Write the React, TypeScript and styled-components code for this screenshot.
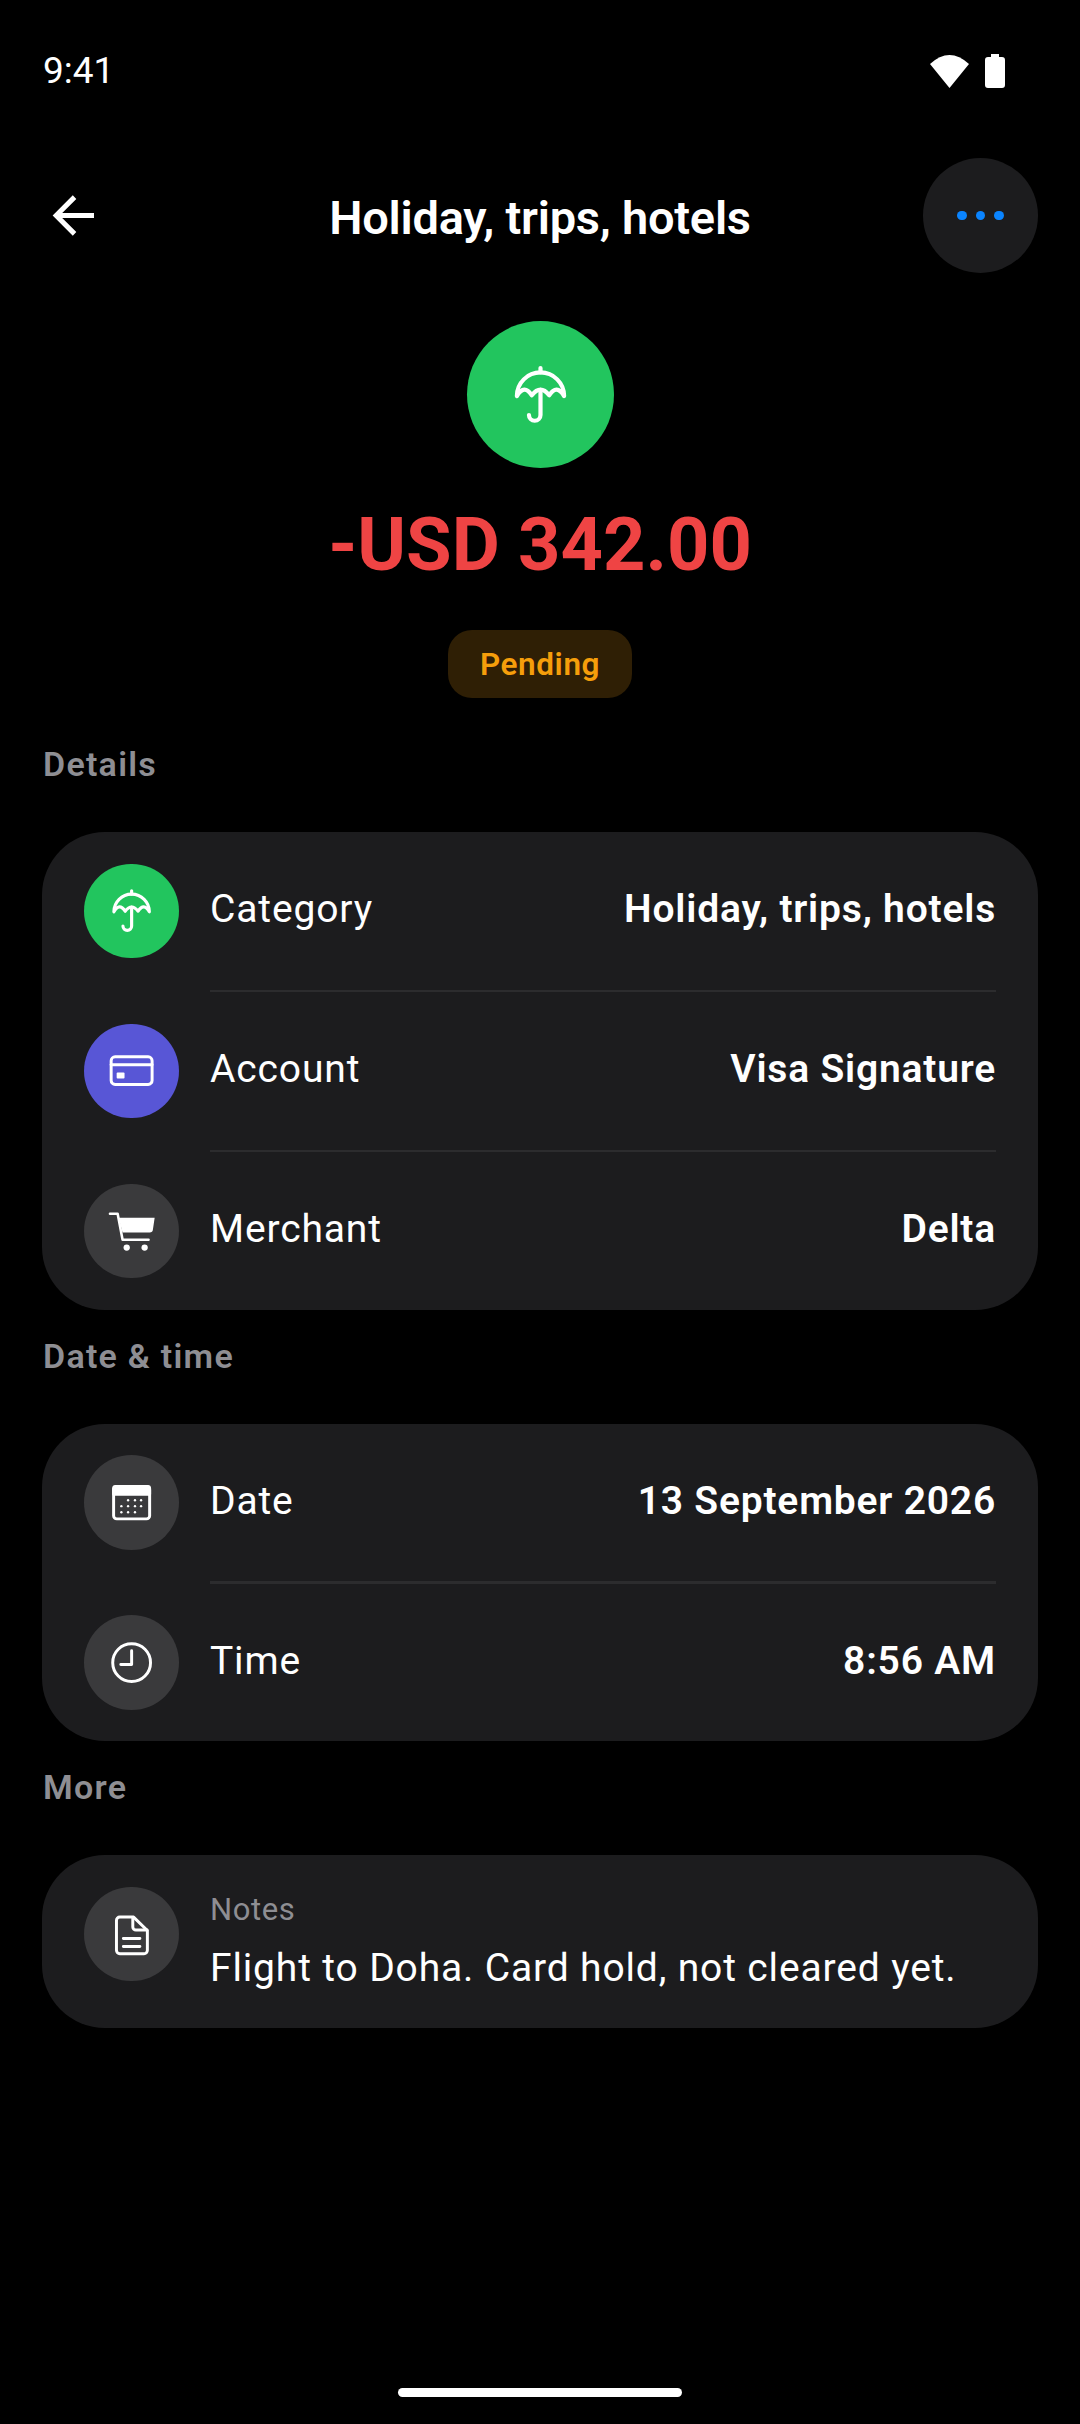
import React from 'react';
import styled, { createGlobalStyle } from 'styled-components';

const GlobalStyle = createGlobalStyle`
  * {
    box-sizing: border-box;
  }

  html,
  body {
    margin: 0;
    background: #000;
  }

  body {
    font-family: Roboto, 'Liberation Sans', sans-serif;
    color: #fff;
  }
`;

const Screen = styled.div`
  width: 1080px;
  height: 2424px;
  background: #000;
  display: flex;
  flex-direction: column;
  overflow: hidden;
`;

const StatusBar = styled.div`
  height: 140px;
  padding: 2px 75px 0 43px;
  display: flex;
  align-items: center;
  justify-content: space-between;
`;

const Clock = styled.span`
  font-size: 37px;
  line-height: 42px;
`;

const StatusIcons = styled.div`
  display: flex;
  align-items: center;
  gap: 16px;
`;

const Header = styled.header`
  margin-top: 18px;
  padding: 0 42px;
  display: grid;
  grid-template-columns: 115px 1fr 115px;
  align-items: center;
`;

const Title = styled.h1`
  margin: 5px 0 0;
  text-align: center;
  font-size: 47px;
  line-height: 54px;
  font-weight: 600;
  letter-spacing: -0.25px;
`;

const MoreButton = styled.button`
  width: 115px;
  height: 115px;
  padding: 0;
  border: 0;
  border-radius: 50%;
  background: #1c1c1e;
  display: flex;
  align-items: center;
  justify-content: center;
  gap: 9px;
`;

const Dot = styled.span`
  width: 9.5px;
  height: 9.5px;
  border-radius: 50%;
  background: #0a84ff;
`;

const Hero = styled.section`
  margin-top: 48px;
  display: flex;
  flex-direction: column;
  align-items: center;
`;

const Amount = styled.div`
  margin-top: 33px;
  font-size: 74px;
  line-height: 88px;
  font-weight: 700;
  color: #ef4444;
`;

const Badge = styled.div`
  margin-top: 41px;
  height: 68px;
  padding: 0 32px;
  border-radius: 24px;
  background: #2f1f05;
  color: #f59e0b;
  font-size: 31.5px;
  font-weight: 600;
  letter-spacing: 0.6px;
  display: flex;
  align-items: center;
`;

const SectionLabel = styled.h2<{ $first?: boolean }>`
  margin: ${({ $first }) => ($first ? '46px' : '26px')} 42px 48px 43px;
  font-size: 34px;
  line-height: 40px;
  font-weight: 600;
  letter-spacing: 1.25px;
  color: #8e8e93;
`;

const Card = styled.section`
  margin: 0 42px;
  border-radius: 63px;
  background: #1c1c1e;
`;

const Row = styled.div<{ $top?: boolean }>`
  padding: 31.5px 42px;
  display: flex;
  align-items: ${({ $top }) => ($top ? 'flex-start' : 'center')};
  gap: 31.5px;
`;

const Divider = styled.div`
  height: 2.6px;
  margin: 0 42px 0 168px;
  background: #2c2c2e;
`;

const IconCircle = styled.div<{ $color?: string; $size?: number }>`
  width: ${({ $size }) => $size ?? 94.5}px;
  height: ${({ $size }) => $size ?? 94.5}px;
  flex: none;
  border-radius: 50%;
  background: ${({ $color }) => $color ?? '#3a3a3c'};
  display: flex;
  align-items: center;
  justify-content: center;
`;

const RowLabel = styled.span`
  flex: 1;
  padding-bottom: 3px;
  font-size: 39px;
  letter-spacing: 0.85px;
  color: #fff;
`;

const RowValue = styled.span`
  padding-bottom: 3px;
  font-size: 39px;
  font-weight: 600;
  letter-spacing: 0.8px;
  color: #fff;
`;

const NoteText = styled.div`
  flex: 1;
  padding-bottom: 5px;
  display: flex;
  flex-direction: column;
`;

const NoteLabel = styled.span`
  font-size: 31px;
  line-height: 45px;
  letter-spacing: 0.6px;
  color: #8e8e93;
`;

const NoteBody = styled.span`
  margin-top: 13px;
  font-size: 39px;
  line-height: 47px;
  letter-spacing: 0.85px;
  color: #fff;
`;

const HomeBar = styled.div`
  width: 284px;
  height: 9px;
  margin: auto auto 27px;
  border-radius: 5px;
  background: #fff;
`;

const Glyph = styled.svg.attrs({ viewBox: '0 0 24 24', fill: 'none' })<{ $size?: number }>`
  width: ${({ $size }) => $size ?? 47.25}px;
  height: ${({ $size }) => $size ?? 47.25}px;
  display: block;
  stroke: #fff;
  stroke-width: 1.5;
  stroke-linecap: round;
  stroke-linejoin: round;
`;

const WifiIcon = () => (
  <svg width="39" height="33" viewBox="0 0 39 33" aria-hidden="true">
    <path d="M0 9Q19.5-9 39 9L19.5 33Z" fill="#fff" />
  </svg>
);

const BatteryIcon = () => (
  <svg width="20" height="34" viewBox="0 0 20 34" aria-hidden="true">
    <path d="M6 0H14V3H17A3 3 0 0 1 20 6V31A3 3 0 0 1 17 34H3A3 3 0 0 1 0 31V6A3 3 0 0 1 3 3H6Z" fill="#fff" />
  </svg>
);

const BackIcon = () => (
  <Glyph $size={63} style={{ strokeWidth: 1.9, strokeLinecap: 'butt', strokeLinejoin: 'miter' }}>
    <path d="M19.8 12H5.2M12.4 5l-7 7 7 7" />
  </Glyph>
);

const UmbrellaIcon = ({ size }: { size?: number }) => (
  <Glyph $size={size} style={{ strokeWidth: 1.6 }}>
    <path d="M12 1.9V3.6" />
    <path d="M3 12.6A9 9 0 0 1 21 12.6Q18.2 7.8 15.3 12.3Q12 8 8.7 12.3Q5.8 7.8 3 12.6Z" />
    <path d="M12 10.2V19.8a2.2 2.2 0 0 1-4.4 0" />
  </Glyph>
);

const CardIcon = () => (
  <Glyph>
    <rect x="1.6" y="5" width="20.8" height="14" rx="2" />
    <path d="M1.6 9H22.4" />
    <rect x="4.4" y="13" width="4" height="3" rx="0.5" fill="#fff" stroke="none" />
  </Glyph>
);

const CartIcon = () => (
  <Glyph style={{ strokeWidth: 1.3 }}>
    <path d="M1 3.4H4.9L7.4 16.6H20.6" />
    <path d="M5.4 5.4H23.7L22.8 11.6A1.6 1.6 0 0 1 21.2 13H7.4Z" fill="#fff" stroke="none" />
    <circle cx="9.5" cy="20.6" r="1.6" fill="#fff" stroke="none" />
    <circle cx="18.6" cy="20.6" r="1.6" fill="#fff" stroke="none" />
  </Glyph>
);

const calendarDots = [
  [10.2, 10.8], [13.7, 10.8], [16.8, 10.8],
  [6.8, 13.8], [10.2, 13.8], [13.7, 13.8], [16.8, 13.8],
  [6.8, 16.9], [10.2, 16.9], [13.7, 16.9],
];

const CalendarIcon = () => (
  <Glyph>
    <rect x="2.85" y="3.85" width="18.3" height="16.4" rx="1.6" />
    <path d="M2.85 4.85A1 1 0 0 1 3.85 3.85H20.15A1 1 0 0 1 21.15 4.85V7.7H2.85Z" fill="#fff" />
    {calendarDots.map(([cx, cy]) => (
      <circle key={`${cx}-${cy}`} cx={cx} cy={cy} r="0.6" fill="#fff" stroke="none" />
    ))}
  </Glyph>
);

const ClockIcon = () => (
  <Glyph>
    <circle cx="12" cy="12" r="9.6" />
    <path d="M12 6V13H6.5" />
  </Glyph>
);

const NoteIcon = () => (
  <Glyph>
    <path d="M6 3.6H13L20 10.4V20.5a1.7 1.7 0 0 1-1.7 1.7H6a1.7 1.7 0 0 1-1.7-1.7V5.3A1.7 1.7 0 0 1 6 3.6Z" />
    <path d="M12.6 3.8V8.6a1.6 1.6 0 0 0 1.6 1.6H19.8" />
    <path d="M7.8 14.5H16.2M7.8 18.5H16.2" />
  </Glyph>
);

const App = () => (
  <Screen>
    <GlobalStyle />
    <StatusBar>
      <Clock>9:41</Clock>
      <StatusIcons>
        <WifiIcon />
        <BatteryIcon />
      </StatusIcons>
    </StatusBar>

    <Header>
      <BackIcon />
      <Title>Holiday, trips, hotels</Title>
      <MoreButton type="button" aria-label="More">
        <Dot />
        <Dot />
        <Dot />
      </MoreButton>
    </Header>

    <Hero>
      <IconCircle $color="#22c55e" $size={147}>
        <UmbrellaIcon size={63} />
      </IconCircle>
      <Amount>-USD 342.00</Amount>
      <Badge>Pending</Badge>
    </Hero>

    <SectionLabel $first>Details</SectionLabel>
    <Card>
      <Row>
        <IconCircle $color="#22c55e"><UmbrellaIcon /></IconCircle>
        <RowLabel>Category</RowLabel>
        <RowValue>Holiday, trips, hotels</RowValue>
      </Row>
      <Divider />
      <Row>
        <IconCircle $color="#5856d6"><CardIcon /></IconCircle>
        <RowLabel>Account</RowLabel>
        <RowValue>Visa Signature</RowValue>
      </Row>
      <Divider />
      <Row>
        <IconCircle><CartIcon /></IconCircle>
        <RowLabel>Merchant</RowLabel>
        <RowValue>Delta</RowValue>
      </Row>
    </Card>

    <SectionLabel>Date &amp; time</SectionLabel>
    <Card>
      <Row>
        <IconCircle><CalendarIcon /></IconCircle>
        <RowLabel>Date</RowLabel>
        <RowValue>13 September 2026</RowValue>
      </Row>
      <Divider />
      <Row>
        <IconCircle><ClockIcon /></IconCircle>
        <RowLabel>Time</RowLabel>
        <RowValue>8:56 AM</RowValue>
      </Row>
    </Card>

    <SectionLabel>More</SectionLabel>
    <Card>
      <Row $top>
        <IconCircle><NoteIcon /></IconCircle>
        <NoteText>
          <NoteLabel>Notes</NoteLabel>
          <NoteBody>Flight to Doha. Card hold, not cleared yet.</NoteBody>
        </NoteText>
      </Row>
    </Card>

    <HomeBar />
  </Screen>
);

export default App;
